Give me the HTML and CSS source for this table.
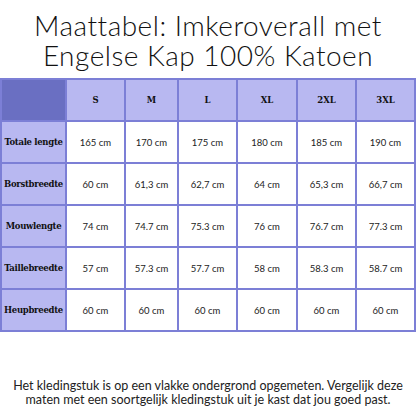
FILE: index.html
```html
<!DOCTYPE html>
<html lang="nl">
<head>
<meta charset="utf-8">
<link rel="stylesheet" href="styles.css">
</head>
<body>
<h1 class="title"><span class="line">Maattabel: Imkeroverall met</span><span class="line">Engelse Kap 100% Katoen</span></h1>
<div class="table">
  <div class="cell corner"></div>
  <div class="cell head">S</div>
  <div class="cell head">M</div>
  <div class="cell head">L</div>
  <div class="cell head">XL</div>
  <div class="cell head">2XL</div>
  <div class="cell head">3XL</div>

  <div class="cell rowhead">Totale lengte</div>
  <div class="cell">165 cm</div><div class="cell">170 cm</div><div class="cell">175 cm</div><div class="cell">180 cm</div><div class="cell">185 cm</div><div class="cell">190 cm</div>

  <div class="cell rowhead">Borstbreedte</div>
  <div class="cell">60 cm</div><div class="cell">61,3 cm</div><div class="cell">62,7 cm</div><div class="cell">64 cm</div><div class="cell">65,3 cm</div><div class="cell">66,7 cm</div>

  <div class="cell rowhead">Mouwlengte</div>
  <div class="cell">74 cm</div><div class="cell">74.7 cm</div><div class="cell">75.3 cm</div><div class="cell">76 cm</div><div class="cell">76.7 cm</div><div class="cell">77.3 cm</div>

  <div class="cell rowhead">Taillebreedte</div>
  <div class="cell">57 cm</div><div class="cell">57.3 cm</div><div class="cell">57.7 cm</div><div class="cell">58 cm</div><div class="cell">58.3 cm</div><div class="cell">58.7 cm</div>

  <div class="cell rowhead">Heupbreedte</div>
  <div class="cell">60 cm</div><div class="cell">60 cm</div><div class="cell">60 cm</div><div class="cell">60 cm</div><div class="cell">60 cm</div><div class="cell">60 cm</div>
</div>
<p class="note">Het kledingstuk is op een vlakke ondergrond opgemeten. Vergelijk deze maten met een soortgelijk kledingstuk uit je kast dat jou goed past.</p>
</body>
</html>
```
FILE: styles.css
```css
html, body {
  margin: 0;
  padding: 0;
  background: #ffffff;
  width: 416px;
  height: 416px;
  overflow: hidden;
}
body {
  font-family: "Lato", "Open Sans", sans-serif;
  color: #1a1a1a;
}
.title {
  margin: 0;
  padding-top: 10px;
  height: 68px;
  font-weight: 300;
  font-size: 28px;
  line-height: 30px;
  text-align: center;
  letter-spacing: 0.5px;
  color: #111;
}
.line {
  display: block;
  height: 30px;
}
.table {
  display: grid;
  grid-template-columns: 63px 57px 51px 57px 58px 57px 57px;
  grid-auto-rows: 40px;
  gap: 2px;
  padding: 2px;
  background: #7c7fd6;
  width: 416px;
  box-sizing: border-box;
}
.cell {
  background: #ffffff;
  display: flex;
  align-items: center;
  justify-content: center;
  font-size: 9.5px;
  color: #222;
}
.corner {
  background: #6a6fc2;
}
.head {
  background: #b8b8f1;
  font-family: "DejaVu Serif", "Liberation Serif", serif;
  font-weight: 700;
  font-size: 8.5px;
  color: #111;
}
.rowhead {
  background: #b8b8f1;
  font-family: "DejaVu Serif", "Liberation Serif", serif;
  font-weight: 700;
  font-size: 8.5px;
  color: #111;
  white-space: nowrap;
  letter-spacing: -0.3px;
}
.note {
  margin: 47px 0 0;
  padding: 0 4px;
  font-size: 12.5px;
  line-height: 13.5px;
  text-align: center;
  color: #222;
}
```
